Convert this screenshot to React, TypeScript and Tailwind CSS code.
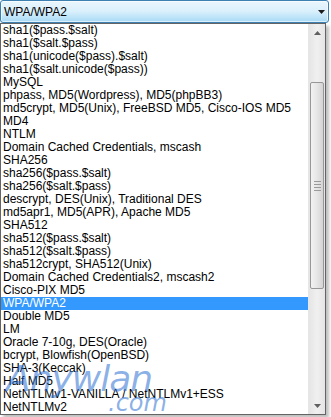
import React from 'react';

const hashTypes: string[] = [
  'sha1($pass.$salt)',
  'sha1($salt.$pass)',
  'sha1(unicode($pass).$salt)',
  'sha1($salt.unicode($pass))',
  'MySQL',
  'phpass, MD5(Wordpress), MD5(phpBB3)',
  'md5crypt, MD5(Unix), FreeBSD MD5, Cisco-IOS MD5',
  'MD4',
  'NTLM',
  'Domain Cached Credentials, mscash',
  'SHA256',
  'sha256($pass.$salt)',
  'sha256($salt.$pass)',
  'descrypt, DES(Unix), Traditional DES',
  'md5apr1, MD5(APR), Apache MD5',
  'SHA512',
  'sha512($pass.$salt)',
  'sha512($salt.$pass)',
  'sha512crypt, SHA512(Unix)',
  'Domain Cached Credentials2, mscash2',
  'Cisco-PIX MD5',
  'WPA/WPA2',
  'Double MD5',
  'LM',
  'Oracle 7-10g, DES(Oracle)',
  'bcrypt, Blowfish(OpenBSD)',
  'SHA-3(Keccak)',
  'Half MD5',
  'NetNTLMv1-VANILLA / NetNTLMv1+ESS',
  'NetNTLMv2',
];

const selected = 'WPA/WPA2';

const App: React.FC = () => {
  return (
    <div className="relative w-[331px] h-[417px] overflow-hidden bg-white font-['Liberation_Sans',Arial,sans-serif] text-[12px] text-black">
      {/* Combo box */}
      <div className="mr-[2px] h-[23px] rounded-[3px] border border-[#3c7fb1] bg-gradient-to-b from-[#eaf6fd] via-[#d9f0fc] to-[#a7d9f5] flex items-center pl-[3px] pr-[3px] shadow-[inset_0_0_0_1px_rgba(255,255,255,0.6)]">
        <span className="flex-1 leading-none">{selected}</span>
        <svg width="7" height="4" viewBox="0 0 7 4">
          <path d="M0 0 H7 L3.5 4 Z" fill="#1b1b1b" />
        </svg>
      </div>

      {/* Dropdown list */}
      <div className="mr-[5px] h-[392px] border border-[#646464] bg-white flex shadow-[3px_3px_3px_rgba(0,0,0,0.25)]">
        <ul className="flex-1">
          {hashTypes.map(item => (
            <li
              key={item}
              className={`h-[13px] leading-[13px] pl-[2px] whitespace-nowrap ${
                item === selected ? 'bg-[#3399ff] text-white' : ''
              }`}
            >
              {item}
            </li>
          ))}
        </ul>

        {/* Scrollbar */}
        <div className="w-[17px] flex flex-col border-l border-[#e6e6e6] bg-gradient-to-r from-[#e5e5e5] via-[#f0f0f0] to-[#e5e5e5]">
          <div className="h-[17px] flex items-center justify-center">
            <svg width="7" height="4" viewBox="0 0 7 4">
              <path d="M0 4 H7 L3.5 0 Z" fill="#606060" />
            </svg>
          </div>
          <div className="h-[41px]" />
          <div className="mx-[1px] h-[207px] rounded-[2px] border border-[#979797] bg-gradient-to-r from-[#f2f2f2] via-[#e6e6e6] to-[#d4d4d4] flex items-center justify-center">
            <div className="w-[7px] flex flex-col gap-[2px]">
              <div className="h-px bg-[#9a9a9a]" />
              <div className="h-px bg-[#9a9a9a]" />
              <div className="h-px bg-[#9a9a9a]" />
              <div className="h-px bg-[#9a9a9a]" />
            </div>
          </div>
          <div className="flex-1" />
          <div className="h-[17px] flex items-center justify-center">
            <svg width="7" height="4" viewBox="0 0 7 4">
              <path d="M0 0 H7 L3.5 4 Z" fill="#606060" />
            </svg>
          </div>
        </div>
      </div>

      {/* Watermark */}
      <div aria-hidden="true" className="absolute left-[6px] top-[361px] pointer-events-none select-none italic font-['DejaVu_Sans',sans-serif] text-[rgba(40,110,210,0.55)]">
        <div className="text-[36px] leading-none tracking-[-1px]">Anywlan</div>
        <div className="ml-[102px] -mt-[6px] text-[24px] leading-none">.com</div>
      </div>
    </div>
  );
};

export default App;
